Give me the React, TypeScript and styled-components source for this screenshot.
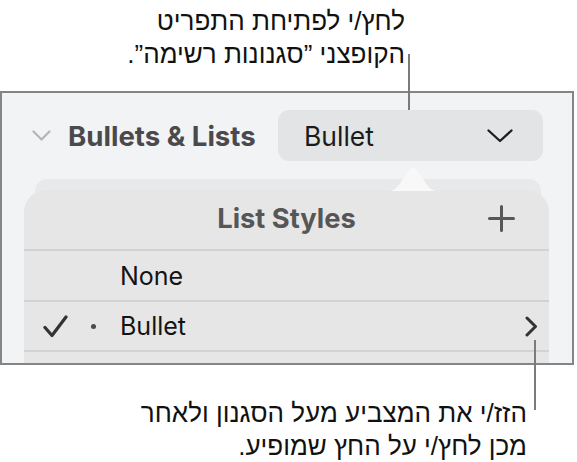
import React from "react";
import styled, { createGlobalStyle } from "styled-components";

const GlobalStyle = createGlobalStyle`
  html, body { margin: 0; padding: 0; background: #ffffff; }
  body { font-family: Inter, "Liberation Sans", sans-serif; -webkit-font-smoothing: antialiased; }
`;

const Page = styled.div`
  position: relative;
  width: 577px;
  height: 462px;
  overflow: hidden;
  background: #ffffff;
`;

const Caption = styled.p<{ $top: number; $right: number }>`
  margin: 0;
  padding-top: ${(p) => p.$top}px;
  padding-right: ${(p) => p.$right}px;
  direction: rtl;
  text-align: right;
  font-family: "Liberation Sans", "Noto Sans", "DejaVu Sans", sans-serif;
  font-size: 26px;
  line-height: 33px;
  color: #111111;
`;

const Leader = styled.div<{ $left: number; $top: number; $height: number }>`
  position: absolute;
  left: ${(p) => p.$left}px;
  top: ${(p) => p.$top}px;
  width: 2px;
  height: ${(p) => p.$height}px;
  background: #7b7b7b;
  z-index: 5;
`;

const Frame = styled.div`
  margin-top: 20px;
  width: 574px;
  height: 274px;
  box-sizing: border-box;
  border: 2px solid #858585;
  background: #f2f3f5;
  overflow: hidden;
  display: flex;
  flex-direction: column;
`;

const SectionHeader = styled.div`
  display: flex;
  align-items: center;
  padding: 17px 29px 0 30px;
`;

const DisclosureIcon = styled.svg`
  flex: none;
  margin-right: 17px;
`;

const SectionTitle = styled.span`
  font-size: 27.6px;
  font-weight: 700;
  color: #4a4a4c;
`;

const PopupButton = styled.div`
  margin-left: auto;
  width: 265px;
  height: 51px;
  box-sizing: border-box;
  border-radius: 11px;
  background: #e3e4e6;
  display: flex;
  align-items: center;
  justify-content: space-between;
  padding: 0 30px 0 26px;
  font-size: 26.5px;
  color: #1b1b1b;
`;

const BackCard = styled.div`
  flex: 1;
  margin: 18px 31px 0 33px;
  padding-top: 11px;
  border-radius: 12px 12px 0 0;
  background: #e8e9eb;
  display: flex;
  flex-direction: column;
`;

const Popover = styled.div`
  position: relative;
  flex: 1;
  margin: 0 -8px 0 -11px;
  border-radius: 22px 22px 0 0;
  background: #e6e6e6;
`;

const Bump = styled.svg`
  position: absolute;
  left: 365px;
  top: -23px;
`;

const PopoverHeader = styled.div`
  height: 59px;
  display: grid;
  grid-template-columns: 1fr auto 1fr;
  align-items: center;
`;

const PopoverTitle = styled.span`
  grid-column: 2;
  font-size: 27.3px;
  font-weight: 700;
  color: #565656;
  padding-bottom: 2px;
`;

const AddIcon = styled.svg`
  grid-column: 3;
  justify-self: end;
  margin-right: 34px;
  margin-bottom: 3px;
`;

const StyleRow = styled.div<{ $height: number }>`
  height: ${(p) => p.$height}px;
  box-sizing: border-box;
  border-top: 2px solid #d2d2d2;
  display: grid;
  grid-template-columns: 47px 30px 1fr auto;
  align-items: center;
  padding: 0 11px 0 19px;
`;

const RowLabel = styled.span`
  grid-column: 3;
  font-size: 25px;
  color: #141414;
`;

const BulletDot = styled.span`
  grid-column: 2;
  width: 5px;
  height: 5px;
  border-radius: 50%;
  background: #4a4a4a;
  margin-left: 1px;
`;

const Check = () => (
  <svg width="25" height="23" viewBox="0 0 25 23" style={{ gridColumn: 1 }}>
    <path d="M2 12.5 L9 20.5 L23 2" fill="none" stroke="#333" strokeWidth="3.2" strokeLinecap="round" strokeLinejoin="round" />
  </svg>
);

export default function App() {
  return (
    <>
      <GlobalStyle />
      <Page>
        <Caption $top={5} $right={172}>
          לחץ/י לפתיחת התפריט
          <br />
          הקופצני ”סגנונות רשימה”.
        </Caption>
        <Leader $left={408} $top={54} $height={56} />

        <Frame>
          <SectionHeader>
            <DisclosureIcon width="19" height="12" viewBox="0 0 19 12">
              <polyline points="1.5,1.5 9.5,9.5 17.5,1.5" fill="none" stroke="#b4b4b6" strokeWidth="2.2" strokeLinecap="round" strokeLinejoin="round" />
            </DisclosureIcon>
            <SectionTitle>Bullets &amp; Lists</SectionTitle>
            <PopupButton>
              <span>Bullet</span>
              <svg width="26" height="14" viewBox="0 0 26 14">
                <polyline points="1.5,1.5 13,12 24.5,1.5" fill="none" stroke="#1d1d1d" strokeWidth="2.3" strokeLinecap="round" strokeLinejoin="round" />
              </svg>
            </PopupButton>
          </SectionHeader>

          <BackCard>
            <Popover>
              <Bump width="48" height="24" viewBox="0 0 48 24">
                <path d="M0 24 C 12 24, 16 1, 24 1 C 32 1, 36 24, 48 24 Z" fill="#f8f8f9" />
              </Bump>
              <PopoverHeader>
                <PopoverTitle>List Styles</PopoverTitle>
                <AddIcon width="27" height="27" viewBox="0 0 27 27">
                  <path d="M13.5 1.5 V25.5 M1.5 13.5 H25.5" fill="none" stroke="#575757" strokeWidth="3" strokeLinecap="round" />
                </AddIcon>
              </PopoverHeader>
              <StyleRow $height={51}>
                <RowLabel>None</RowLabel>
              </StyleRow>
              <StyleRow $height={50}>
                <Check />
                <BulletDot />
                <RowLabel>Bullet</RowLabel>
                <svg width="13" height="21" viewBox="0 0 13 21">
                  <polyline points="2,2 10.5,10.5 2,19" fill="none" stroke="#333" strokeWidth="3" strokeLinecap="round" strokeLinejoin="round" />
                </svg>
              </StyleRow>
              <StyleRow $height={50} />
            </Popover>
          </BackCard>
        </Frame>

        <Leader $left={534} $top={340} $height={70} />
        <Caption $top={32} $right={50}>
          הזז/י את המצביע מעל הסגנון ולאחר
          <br />
          מכן לחץ/י על החץ שמופיע.
        </Caption>
      </Page>
    </>
  );
}
